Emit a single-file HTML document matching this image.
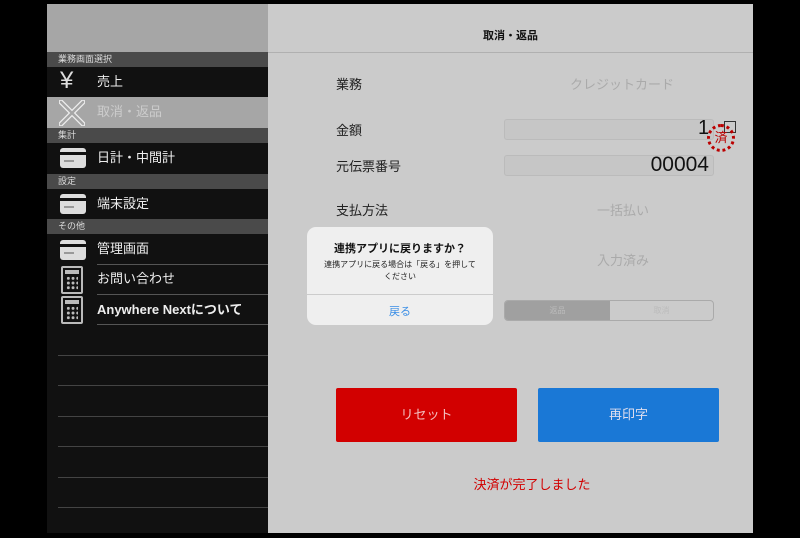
<!DOCTYPE html>
<html><head><meta charset="utf-8"><style>
*{margin:0;padding:0;box-sizing:border-box}
body{width:800px;height:538px;background:#000;position:relative;overflow:hidden;font-family:"Liberation Sans","Noto Sans CJK JP",sans-serif}
.a{position:absolute}
.side{left:47px;top:4px;width:221px;height:529px;background:#111}
.hd{left:47px;width:221px;height:15px;background:#4a4a4a;color:#ddd;font-size:9px;padding-left:11px;line-height:15px}
.row{left:47px;width:221px;color:#eee;font-size:13px;line-height:30px;padding-left:50px}
.ln{left:97px;width:171px;height:1px;background:#555}
.el{left:58px;width:210px;height:1px;background:#444}
.main{left:268px;top:4px;width:485px;height:529px;background:#cbcbcb}
.lbl{font-size:13px;color:#222}
.card{width:26px;height:20px;border-radius:3px;background:#ddd;overflow:hidden}
.calc{width:22px;height:28px;border:2px solid #bbb;border-radius:2px}
.grid{margin:2px 3px;height:14px;background:radial-gradient(circle,#bbb 1.4px,transparent 1.6px) 0 0/4.7px 4.7px}
</style></head><body>
<div class="a side"></div>
<div class="a" style="left:47px;top:4px;width:221px;height:48px;background:#a6a6a6"></div>
<div class="a hd" style="top:52px">業務画面選択</div>
<div class="a row" style="top:67px">売上</div>
<div class="a" style="left:60px;top:69px;color:#ddd;font-size:24px;line-height:24px">¥</div>
<div class="a row" style="top:97px;height:31px;background:#a6a6a6;color:#ccc">取消・返品</div>
<svg class="a" style="left:59px;top:100px" width="26" height="26"><path d="M2 2L24 24M24 2L2 24" stroke="#eee" stroke-width="5" stroke-linecap="round"/><path d="M2 2L24 24M24 2L2 24" stroke="#a6a6a6" stroke-width="2.5" stroke-linecap="round"/></svg>
<div class="a hd" style="top:128px">集計</div>
<div class="a row" style="top:143px">日計・中間計</div>
<div class="a hd" style="top:174px">設定</div>
<div class="a row" style="top:189px">端末設定</div>
<div class="a hd" style="top:219px">その他</div>
<div class="a row" style="top:234px">管理画面</div>
<div class="a ln" style="top:264px"></div>
<div class="a row" style="top:264px">お問い合わせ</div>
<div class="a ln" style="top:294px"></div>
<div class="a row" style="top:295px;font-weight:bold">Anywhere Nextについて</div>
<div class="a ln" style="top:324px"></div>
<div class="a card" style="left:60px;top:148px"><div style="margin-top:4px;height:3px;background:#111"></div><div style="margin:5px 0 0 4px;width:10px;height:2px;background:#999"></div></div>
<div class="a card" style="left:60px;top:194px"><div style="margin-top:4px;height:3px;background:#111"></div><div style="margin:5px 0 0 4px;width:10px;height:2px;background:#999"></div></div>
<div class="a card" style="left:60px;top:240px"><div style="margin-top:4px;height:3px;background:#111"></div><div style="margin:5px 0 0 4px;width:10px;height:2px;background:#999"></div></div>
<div class="a calc" style="left:61px;top:266px"><div style="margin:2px;height:4px;background:#bbb"></div><div class="grid"></div></div>
<div class="a calc" style="left:61px;top:296px"><div style="margin:2px;height:4px;background:#bbb"></div><div class="grid"></div></div>
<div class="a el" style="top:355px"></div><div class="a el" style="top:385px"></div><div class="a el" style="top:416px"></div><div class="a el" style="top:446px"></div><div class="a el" style="top:477px"></div><div class="a el" style="top:507px"></div>

<div class="a main"></div>
<div class="a" style="left:268px;top:52px;width:485px;height:1px;background:#b0b0b0"></div>
<div class="a" style="left:268px;top:27px;width:485px;text-align:center;font-size:11px;font-weight:bold;color:#111">取消・返品</div>
<div class="a lbl" style="left:336px;top:74px">業務</div>
<div class="a" style="left:570px;top:74px;font-size:13px;color:#aaa">クレジットカード</div>
<div class="a lbl" style="left:336px;top:120px">金額</div>
<div class="a" style="left:504px;top:119px;width:210px;height:21px;border:1px solid #bbb;border-radius:3px;background:#c6c6c6"></div>
<div class="a" style="left:698px;top:117px;font-size:20px;color:#111">1</div>
<div class="a" style="left:724px;top:121px;width:12px;height:12px;border:1.5px solid #333"></div>
<div class="a" style="left:707px;top:124px;width:28px;height:28px;border:3px dotted #b00;border-radius:50%;color:#b00;font-size:13px;line-height:22px;text-align:center">済</div>
<div class="a lbl" style="left:336px;top:156px">元伝票番号</div>
<div class="a" style="left:504px;top:155px;width:210px;height:21px;border:1px solid #bbb;border-radius:3px;background:#c6c6c6"></div>
<div class="a" style="left:604px;top:153px;width:105px;text-align:right;font-size:21px;color:#111">00004</div>
<div class="a lbl" style="left:336px;top:200px">支払方法</div>
<div class="a" style="left:597px;top:200px;font-size:13px;color:#aaa">一括払い</div>
<div class="a" style="left:597px;top:250px;font-size:13px;color:#aaa">入力済み</div>
<div class="a" style="left:504px;top:300px;width:210px;height:21px;border:1px solid #aaa;border-radius:4px;overflow:hidden;font-size:8px;color:#bbb;display:flex"><div style="width:105px;background:#a0a0a0;text-align:center;line-height:19px">返品</div><div style="flex:1;text-align:center;line-height:19px">取消</div></div>
<div class="a" style="left:336px;top:388px;width:181px;height:54px;background:#d20000;border-radius:2px;color:#f3c0c0;font-size:13px;text-align:center;line-height:54px">リセット</div>
<div class="a" style="left:538px;top:388px;width:181px;height:54px;background:#1a78d6;border-radius:2px;color:#dde;font-size:13px;text-align:center;line-height:54px">再印字</div>
<div class="a" style="left:268px;top:474px;width:528px;text-align:center;font-size:13px;color:#d20000">決済が完了しました</div>

<div class="a" style="left:307px;top:227px;width:186px;height:98px;background:#efefef;border-radius:9px;text-align:center">
<div style="margin-top:13px;font-size:11px;font-weight:bold;color:#111">連携アプリに戻りますか？</div>
<div style="margin-top:3px;font-size:8px;color:#222;line-height:12px">連携アプリに戻る場合は「戻る」を押して<br>ください</div>
<div style="position:absolute;top:67px;left:0;width:186px;height:1px;background:#ccc"></div>
<div style="position:absolute;top:76px;left:0;width:186px;font-size:11px;color:#3a8ee6">戻る</div>
</div>
</body></html>
